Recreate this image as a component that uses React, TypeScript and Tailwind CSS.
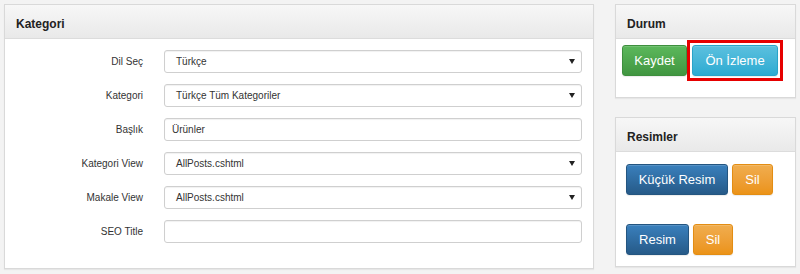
import type { ReactNode } from 'react';

const font = { fontFamily: '"Liberation Sans", Arial, sans-serif' };

function Panel({ title, className, children }: { title: string; className: string; children: ReactNode }) {
  return (
    <div className={`bg-white border border-[#d9d9d9] shadow-[0_1px_1px_rgba(0,0,0,0.05)] flex flex-col ${className}`}>
      <div className="h-[34px] shrink-0 flex items-center px-[11px] pt-[5px] bg-gradient-to-b from-[#f7f7f7] to-[#e9e9e9] border-b border-[#dcdcdc] text-[12px] font-bold text-[#222]">
        {title}
      </div>
      {children}
    </div>
  );
}

function Field({ label, value, select }: { label: string; value?: string; select?: boolean }) {
  return (
    <div className="flex items-center h-[23px]">
      <label className="w-[138px] text-right text-[10px] text-[#333] shrink-0">{label}</label>
      <div className="ml-[21px] flex-1 h-[23px] border border-[#cfcfcf] rounded-[3px] bg-white shadow-[inset_0_1px_1px_rgba(0,0,0,0.06)] flex items-center pr-[6px]">
        <span className={`flex-1 text-[10px] text-[#333] ${select ? 'pl-[11px]' : 'pl-[7px]'}`}>{value}</span>
        {select && (
          <svg width="6" height="5" viewBox="0 0 6 5">
            <path d="M0 0H6L3 5Z" fill="#222" />
          </svg>
        )}
      </div>
    </div>
  );
}

function Btn({ children, tone, w }: { children: ReactNode; tone: string; w: string }) {
  return (
    <button className={`h-[31px] rounded-[3px] border text-white text-[13px] flex items-center justify-center shadow-[inset_0_1px_0_rgba(255,255,255,0.15),0_1px_1px_rgba(0,0,0,0.08)] ${tone} ${w}`}>
      {children}
    </button>
  );
}

const green = 'bg-gradient-to-b from-[#5cb85c] to-[#419641] border-[#3e8f3e]';
const info = 'bg-gradient-to-b from-[#5bc0de] to-[#2aabd2] border-[#28a4c9]';
const primary = 'bg-gradient-to-b from-[#3a80bd] to-[#265a88] border-[#245580]';
const warning = 'bg-gradient-to-b from-[#f0ad4e] to-[#eb9316] border-[#e38d13]';

export default function App() {
  return (
    <div style={font} className="w-[800px] h-[274px] bg-[#f3f3f3] flex gap-[21px] pl-[4px] pt-[4px]">
      <Panel title="Kategori" className="w-[590px] h-[265px]">
        <div className="flex flex-col gap-[11px] pt-[11px] pr-[11px]">
          <Field label="Dil Seç" value="Türkçe" select />
          <Field label="Kategori" value="Türkçe Tüm Kategoriler" select />
          <Field label="Başlık" value="Ürünler" />
          <Field label="Kategori View" value="AllPosts.cshtml" select />
          <Field label="Makale View" value="AllPosts.cshtml" select />
          <Field label="SEO Title" />
        </div>
      </Panel>

      <div className="w-[181px] flex flex-col gap-[19px]">
        <Panel title="Durum" className="h-[94px]">
          <div className="flex gap-[5px] pt-[6px] pl-[6px]">
            <Btn tone={green} w="w-[65px]">Kaydet</Btn>
            <div className="outline-[3px] outline-solid outline-[#e60000] outline-offset-[2px]">
              <Btn tone={info} w="w-[86px]">Ön İzleme</Btn>
            </div>
          </div>
        </Panel>

        <Panel title="Resimler" className="h-[150px]">
          <div className="flex flex-col gap-[29px] pt-[12px] pl-[10px]">
            <div className="flex gap-[4px]">
              <Btn tone={primary} w="w-[102px]">Küçük Resim</Btn>
              <Btn tone={warning} w="w-[41px]">Sil</Btn>
            </div>
            <div className="flex gap-[4px]">
              <Btn tone={primary} w="w-[63px]">Resim</Btn>
              <Btn tone={warning} w="w-[40px]">Sil</Btn>
            </div>
          </div>
        </Panel>
      </div>
    </div>
  );
}
